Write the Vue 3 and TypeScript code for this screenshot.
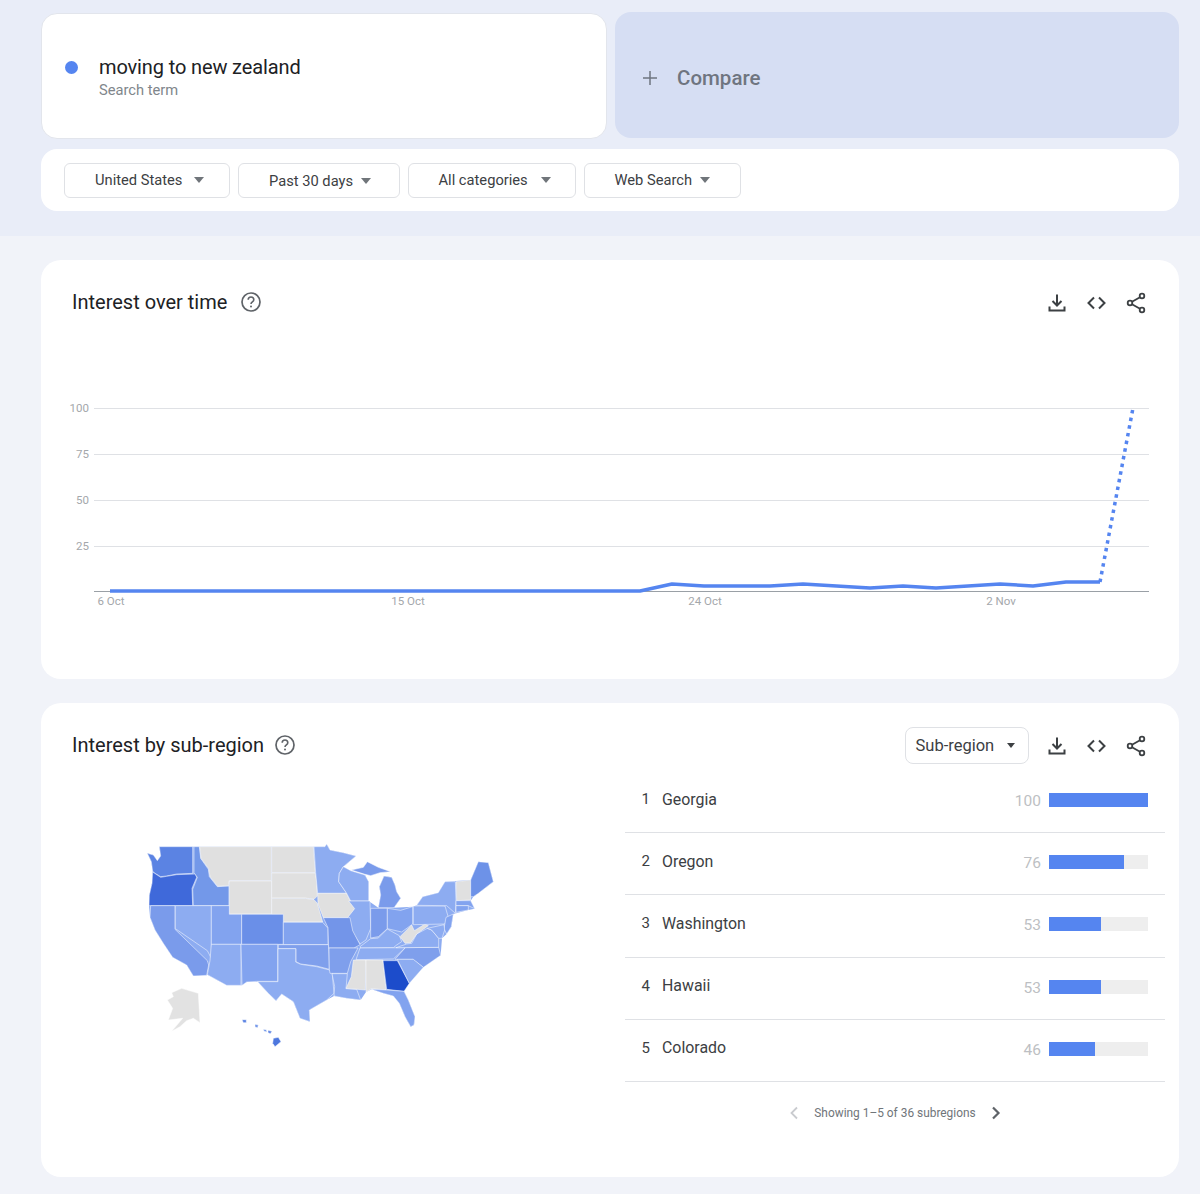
<script setup lang="ts">
const filters: string[] = ['United States', 'Past 30 days', 'All categories', 'Web Search']

const gridLines = [
  { y: 148.5, label: '100' },
  { y: 194.5, label: '75' },
  { y: 240.5, label: '50' },
  { y: 286.5, label: '25' },
]
const dates = [
  { x: 70, label: '6 Oct' },
  { x: 367, label: '15 Oct' },
  { x: 664, label: '24 Oct' },
  { x: 960, label: '2 Nov' },
]
const solidLine = '69,331 599,331 631,324 663,326 729,326 762,324 829,328 862,326 895,328 959,324 992,326 1025,322 1059,322'
const dottedLine = 'M1059 322 L1092 148'

const regions = [
  { rank: 1, name: 'Georgia', value: 100 },
  { rank: 2, name: 'Oregon', value: 76 },
  { rank: 3, name: 'Washington', value: 53 },
  { rank: 4, name: 'Hawaii', value: 53 },
  { rank: 5, name: 'Colorado', value: 46 },
]

const GRAY = '#e0e0e0'
const L = '#8dacf1'
const L2 = '#82a3ef'
const M = '#7a9beb'
const outline = 'M52 70L70 75L82 92L92 78L88 50L585 50L590 42L600 60L640 68L678 78L640 110L662 122L705 135L716 155L716 213L745 233L752 195L748 170L762 138L785 142L795 165L800 185L812 205L792 233L848 230L860 226L878 200L925 188L945 155L1022 150L1045 95L1075 98L1090 155L1045 190L1030 200L1022 212L1034 236L1015 240L970 252L964 290L950 312L936 325L932 376L880 412L838 460L822 484L835 510L855 560L852 585L842 590L825 560L808 520L790 498L760 490L725 478L708 486L692 510L650 505L612 498L590 510L538 540L540 575L510 565L490 515L455 492L438 512L415 490L383 455L350 456L336 466L290 466L232 434L230 436L190 438L170 405L128 382L100 340L75 300L60 262L57 227L58 195L66 160L68 124L64 95Z'
const states: { d: string; fill: string }[] = [
  { fill: '#5b83e3', d: 'M88 50L188 50L188 130L140 132L110 138L92 140L75 130L68 124L64 95L52 70L70 75L82 92L92 78Z' },
  { fill: '#3f69da', d: 'M68 126L92 142L110 139L140 134L196 132L200 142L186 175L188 227L57 227L58 195L66 160Z' },
  { fill: '#7398e9', d: 'M192 50L208 50L212 85L235 118L238 140L262 170L297 168L297 227L190 227L188 178L202 142L192 128Z' },
  { fill: GRAY, d: 'M209 50L424 50L424 152L298 152L296 167L263 169L240 140L236 116L213 85Z' },
  { fill: GRAY, d: 'M298 153L425 153L425 252L298 252Z' },
  { fill: GRAY, d: 'M425 50L550 50L556 128L425 128Z' },
  { fill: GRAY, d: 'M425 129L556 129L560 150L562 198L552 208L526 204L425 204Z' },
  { fill: GRAY, d: 'M425 205L526 205L552 209L562 220L578 276L460 276L460 253L425 253Z' },
  { fill: L, d: 'M552 50L585 50L590 42L600 60L640 68L678 78L640 110L628 130L626 155L650 190L563 190L557 128Z' },
  { fill: GRAY, d: 'M563 190L650 190L662 215L674 236L660 263L580 263L564 222Z' },
  { fill: L, d: 'M640 110L662 122L705 135L716 155L716 213L662 213L650 190L626 155L628 130Z' },
  { fill: M, d: 'M664 120L700 112L712 95L745 112L782 125L750 128L722 137L705 133Z' },
  { fill: M, d: 'M762 138L785 142L795 165L800 185L812 205L792 233L745 233L752 195L748 170Z' },
  { fill: L, d: 'M656 213L720 213L722 296L708 330L690 342L668 308L652 264L674 236Z' },
  { fill: M, d: 'M722 235L772 235L772 296L745 320L722 324Z' },
  { fill: L2, d: 'M772 235L812 241L848 230L848 282L815 306L772 296Z' },
  { fill: L, d: 'M690 350L722 326L745 324L772 297L808 317L815 335L800 345L790 353L692 354Z' },
  { fill: L, d: 'M690 354L826 353L790 387L678 389Z' },
  { fill: '#7f9fec', d: 'M826 353L926 352L932 376L880 412L848 388L795 388Z' },
  { fill: L, d: 'M798 353L830 342L845 340L860 312L892 295L905 300L926 325L926 352Z' },
  { fill: GRAY, d: 'M810 320L845 285L853 302L885 282L895 287L860 312L842 338L825 340Z' },
  { fill: L, d: 'M850 228L945 228L955 262L945 282L850 284Z' },
  { fill: L, d: 'M860 226L878 200L925 188L945 155L976 155L978 215L976 250L950 227Z' },
  { fill: GRAY, d: 'M978 155L1022 150L1022 210L980 212Z' },
  { fill: '#6d92e8', d: 'M1022 150L1045 95L1075 98L1090 155L1045 190L1030 200L1022 200Z' },
  { fill: L2, d: 'M978 212L1022 212L1034 236L1015 227L978 227Z' },
  { fill: L2, d: 'M978 227L1015 227L1015 240L978 247Z' },
  { fill: L2, d: 'M948 262L970 252L964 290L950 312L942 296Z' },
  { fill: L, d: 'M892 295L942 284L944 300L936 325L926 325L905 300Z' },
  { fill: M, d: 'M62 227L135 227L135 298L232 392L236 405L230 436L190 438L170 405L128 382L100 340L75 300L60 262Z' },
  { fill: L, d: 'M136 227L244 227L244 385L232 362L136 296Z' },
  { fill: L2, d: 'M244 227L298 227L298 253L335 253L335 343L244 343Z' },
  { fill: '#6a8fe8', d: 'M335 253L460 253L460 343L335 343Z' },
  { fill: L, d: 'M244 343L333 343L333 466L290 466L232 434L240 392Z' },
  { fill: L2, d: 'M333 343L443 343L443 454L380 454L350 456L336 466Z' },
  { fill: L2, d: 'M460 277L578 277L594 295L594 344L460 344Z' },
  { fill: '#7f9fec', d: 'M445 344L596 344L598 418L560 408L512 402L498 395L498 356L445 356Z' },
  { fill: L, d: 'M444 356L497 356L497 396L512 403L560 410L606 422L612 490L590 510L538 540L540 575L510 565L490 515L455 492L438 512L415 490L383 455L444 455Z' },
  { fill: '#7395e9', d: 'M580 263L660 263L668 302L690 344L672 354L596 354L594 293Z' },
  { fill: '#7f9fec', d: 'M597 354L684 354L662 395L652 430L600 430L598 418Z' },
  { fill: L, d: 'M606 431L652 431L648 476L680 478L692 510L650 505L612 498L614 470Z' },
  { fill: GRAY, d: 'M670 390L708 390L706 480L648 475L664 440Z' },
  { fill: GRAY, d: 'M708 390L759 390L768 480L725 476L708 486Z' },
  { fill: '#1c4ccb', d: 'M759 392L802 392L838 460L822 484L770 478Z' },
  { fill: L, d: 'M802 388L850 388L880 412L838 460Z' },
  { fill: L2, d: 'M725 478L770 480L822 484L835 510L855 560L852 585L842 590L825 560L808 520L790 498L760 490Z' },
  { fill: '#e2e2e2', d: 'M125 488L155 475L205 490L210 578L190 565L170 572L150 590L125 604L158 565L115 570L128 535L112 510L130 500Z' },
  { fill: '#4d77de', d: 'M430 625L445 622L453 635L435 650L428 640Z' },
  { fill: '#5b83e3', d: 'M336 569L349 569L349 578L340 578Z' },
  { fill: '#6d92e8', d: 'M375 583L385 585L383 593L375 591Z' },
  { fill: '#7398e9', d: 'M400 598L409 599L411 606L402 604Z' },
  { fill: '#5b83e3', d: 'M414 601L426 604L421 611L414 608Z' },
]
</script>

<template>
  <div class="page">
    <header class="hero">
      <div class="terms">
        <div class="term-card">
          <span class="dot"></span>
          <div>
            <div class="term-name">moving to new zealand</div>
            <div class="term-sub">Search term</div>
          </div>
        </div>
        <div class="compare">
          <svg class="plus" width="16" height="16" viewBox="0 0 16 16"><path d="M8 1v14M1 8h14" stroke="#6f7580" stroke-width="1.5" fill="none" /></svg>
          <span>Compare</span>
        </div>
      </div>
      <div class="filters">
        <button v-for="f in filters" :key="f" class="pill">
          <span>{{ f }}</span>
          <span class="caret"></span>
        </button>
      </div>
    </header>

    <main class="content">
      <section class="card chart-card">
        <div class="head">
          <h2>Interest over time</h2>
          <svg class="help" width="24" height="24" viewBox="0 0 24 24"><circle cx="12" cy="12" r="9" fill="none" stroke="#5f6368" stroke-width="1.7" /><path d="M9.2 9.8a2.8 2.8 0 0 1 5.6 0c0 2-2.8 2.2-2.8 4.2" fill="none" stroke="#5f6368" stroke-width="1.6" /><circle cx="12" cy="16.6" r="1" fill="#5f6368" /></svg>
          <div class="actions">
            <svg class="ico" viewBox="0 0 24 24"><path d="M12 3.500v10.500M7.500 10l4.500 4.500 4.500-4.500M4.500 15.500v4h15v-4" fill="none" stroke="#3c4043" stroke-width="2" /></svg>
            <svg class="ico" viewBox="0 0 24 24"><path d="M9 6.500 3.500 12 9 17.500M14 6.500 19.500 12 14 17.500" fill="none" stroke="#3c4043" stroke-width="2" /></svg>
            <svg class="ico" viewBox="0 0 24 24"><g fill="none" stroke="#3c4043" stroke-width="1.800"><circle cx="18" cy="5" r="2.300" /><circle cx="6" cy="12" r="2.300" /><circle cx="18" cy="19" r="2.300" /><path d="M8 10.800l8-4.600M8 13.200l8 4.600" /></g></svg>
          </div>
        </div>
        <svg class="chart" viewBox="0 84 1138 280" width="1138" height="280">
          <g v-for="g in gridLines" :key="g.label">
            <line x1="53" x2="1108" :y1="g.y" :y2="g.y" stroke="#dfe1e5" />
            <text x="48" :y="g.y + 3.5" text-anchor="end" class="axis">{{ g.label }}</text>
          </g>
          <line x1="53" x2="1108" y1="331.5" y2="331.5" stroke="#9aa0a6" />
          <text v-for="d in dates" :key="d.label" :x="d.x" y="345" text-anchor="middle" class="axis">{{ d.label }}</text>
          <polyline :points="solidLine" fill="none" stroke="#5585f0" stroke-width="3.500" stroke-linejoin="round" />
          <path :d="dottedLine" fill="none" stroke="#5585f0" stroke-width="3.500" stroke-dasharray="3.500 4.300" />
        </svg>
      </section>

      <section class="card region-card">
        <div class="head">
          <h2>Interest by sub-region</h2>
          <svg class="help tight" width="24" height="24" viewBox="0 0 24 24"><circle cx="12" cy="12" r="9" fill="none" stroke="#5f6368" stroke-width="1.700" /><path d="M9.200 9.800a2.800 2.800 0 0 1 5.600 0c0 2-2.800 2.200-2.800 4.200" fill="none" stroke="#5f6368" stroke-width="1.600" /><circle cx="12" cy="16.600" r="1" fill="#5f6368" /></svg>
          <div class="actions">
            <button class="select"><span>Sub-region</span><span class="caret dark"></span></button>
            <svg class="ico" viewBox="0 0 24 24"><path d="M12 3.500v10.500M7.500 10l4.500 4.500 4.500-4.500M4.500 15.500v4h15v-4" fill="none" stroke="#3c4043" stroke-width="2" /></svg>
            <svg class="ico" viewBox="0 0 24 24"><path d="M9 6.500 3.500 12 9 17.500M14 6.500 19.500 12 14 17.500" fill="none" stroke="#3c4043" stroke-width="2" /></svg>
            <svg class="ico" viewBox="0 0 24 24"><g fill="none" stroke="#3c4043" stroke-width="1.800"><circle cx="18" cy="5" r="2.300" /><circle cx="6" cy="12" r="2.300" /><circle cx="18" cy="19" r="2.300" /><path d="M8 10.800l8-4.600M8 13.200l8 4.600" /></g></svg>
          </div>
        </div>
        <div class="region-body">
          <svg class="map" viewBox="0 0 1140 690" width="380" height="230">
            <path :d="outline" :fill="L" />
            <path v-for="(s, i) in states" :key="i" :d="s.d" :fill="s.fill" stroke="#fff" stroke-width="1.500" stroke-linejoin="round" />
          </svg>
          <div class="list">
            <div v-for="r in regions" :key="r.rank" class="row">
              <span class="rank">{{ r.rank }}</span>
              <span class="name">{{ r.name }}</span>
              <span class="value">{{ r.value }}</span>
              <span class="track"><span class="fill" :style="{ width: r.value + '%' }"></span></span>
            </div>
            <div class="pager">
              <svg width="10" height="14" viewBox="0 0 10 14"><path d="M8 1.500 2.500 7 8 12.500" fill="none" stroke="#c9cbcf" stroke-width="1.800" /></svg>
              <span>Showing 1–5 of 36 subregions</span>
              <svg width="10" height="14" viewBox="0 0 10 14"><path d="M2 1.500 7.500 7 2 12.500" fill="none" stroke="#5f6368" stroke-width="2.200" /></svg>
            </div>
          </div>
        </div>
      </section>
    </main>
  </div>
</template>

<style>
body { margin: 0; background: #f1f3f9; }
</style>

<style scoped>
.page { width: 1200px; height: 1194px; overflow: hidden; font-family: Roboto, "Liberation Sans", sans-serif; color: #202124; background: #f1f3f9; }
.hero { height: 236px; box-sizing: border-box; padding: 12px 21px 0 41px; background: #e9edf8; }
.terms { display: flex; gap: 8px; align-items: flex-start; }
.term-card { box-sizing: border-box; width: 566px; height: 126px; margin-top: 1px; padding: 0 0 0 23px; display: flex; align-items: center; gap: 21px; background: #fff; border: 1px solid #e2e5ec; border-radius: 16px; }
.dot { width: 13px; height: 13px; border-radius: 50%; background: #5585f0; margin-bottom: 17px; }
.term-name { font-size: 20px; line-height: 26px; padding-top: 1px; color: #202124; letter-spacing: -.13px; }
.term-sub { font-size: 14.700px; line-height: 18px; margin-top: 1px; color: #80868b; }
.compare { box-sizing: border-box; width: 564px; height: 126px; padding: 6px 0 0 27px; display: flex; align-items: center; gap: 19px; background: #d6def3; border-radius: 16px; font-size: 20.500px; font-weight: 500; color: #6f7580; }
.plus { flex: none; }
.filters { box-sizing: border-box; margin-top: 10px; height: 62px; padding: 14px 23px; display: grid; grid-template-columns: 166px 162px 168px 157px; gap: 8px; background: #fff; border-radius: 16px; }
.pill { box-sizing: border-box; height: 35px; padding: 0 0 2px 30px; display: flex; align-items: center; gap: 12px; background: #fff; border: 1px solid #dfe1e5; border-radius: 6px; font: inherit; font-size: 14.700px; color: #3c4043; }
.pill:nth-child(2) { gap: 8px; padding-bottom: 0; }
.pill:nth-child(3) { gap: 13px; padding-left: 29.500px; }
.pill:nth-child(4) { gap: 8px; padding-left: 29.500px; }
.caret { width: 0; height: 0; border-left: 5px solid transparent; border-right: 5px solid transparent; border-top: 6px solid #70757a; }
.caret.dark { border-top-color: #3c4043; border-left-width: 4.500px; border-right-width: 4.500px; border-top-width: 5px; }
.content { padding: 24px 21px 0 41px; display: flex; flex-direction: column; gap: 24px; }
.card { background: #fff; border-radius: 20px; }
.chart-card { height: 419px; }
.region-card { height: 474px; }
.head { box-sizing: border-box; height: 61px; padding: 24px 31px 0; display: flex; align-items: flex-start; }
.head h2 { margin: 0; font-size: 20px; font-weight: 400; line-height: 37px; color: #202124; }
.help { margin: 6px 0 0 12px; flex: none; }
.help.tight { margin-left: 9px; }
.actions { margin-left: auto; display: flex; align-items: center; gap: 15.500px; height: 37px; }
.ico { width: 24px; height: 24px; flex: none; }
.select { box-sizing: border-box; width: 124px; height: 37px; margin-right: 1px; padding: 0 0 0 10px; display: flex; align-items: center; gap: 13px; background: #fff; border: 1px solid #dfe1e5; border-radius: 8px; font: inherit; font-size: 16.500px; color: #3c4043; }
.chart { display: block; margin-top: 23px; }
.axis { font-size: 11.500px; fill: #a4a7ab; }
.region-body { display: flex; padding-left: 89px; padding-top: 7px; }
.map { flex: none; margin-top: 59px; margin-right: 115px; }
.list { width: 540px; flex: none; }
.row { box-sizing: border-box; height: 62.200px; padding: 0 17px 3px 16.500px; display: flex; align-items: center; border-bottom: 1px solid #dfe1e5; }
.rank { width: 20.500px; font-size: 15px; margin-bottom: 2px; color: #3c4043; }
.name { flex: 1; font-size: 15.900px; margin-bottom: 2px; color: #3c4043; }
.value { font-size: 15.500px; color: #bdbfc3; margin-right: 8px; padding-top: 2px; }
.track { display: block; width: 99px; height: 14px; background: #eeeeee; }
.fill { display: block; height: 100%; background: #5585f0; }
.pager { margin-top: 24px; display: flex; justify-content: center; align-items: center; gap: 15px; font-size: 11.900px; color: #70757a; }
</style>
